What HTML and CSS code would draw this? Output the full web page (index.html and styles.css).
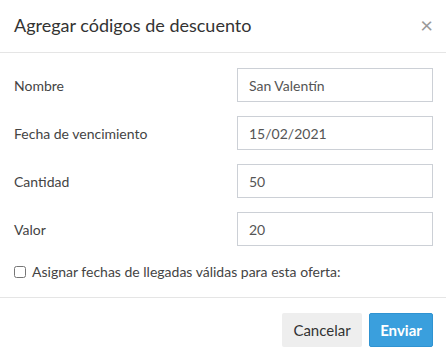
FILE: index.html
```html
<!DOCTYPE html>
<html lang="es">
<head>
    <meta charset="UTF-8">
    <meta name="viewport" content="width=device-width, initial-scale=1.0">
    <title>Agregar códigos de descuento</title>
    <link rel="stylesheet" href="styles.css">
</head>
<body>
    <div class="modal">
        <div class="modal-header">
            <h4 class="modal-title">Agregar códigos de descuento</h4>
            <button type="button" class="close">&times;</button>
        </div>
        <form class="modal-body">
            <div class="form-row">
                <label for="nombre">Nombre</label>
                <input type="text" id="nombre" value="San Valentín">
            </div>
            <div class="form-row">
                <label for="fecha">Fecha de vencimiento</label>
                <input type="text" id="fecha" value="15/02/2021">
            </div>
            <div class="form-row">
                <label for="cantidad">Cantidad</label>
                <input type="text" id="cantidad" value="50">
            </div>
            <div class="form-row">
                <label for="valor">Valor</label>
                <input type="text" id="valor" value="20">
            </div>
            <label class="check">
                <input type="checkbox" id="fechas">
                <span>Asignar fechas de llegadas válidas para esta oferta:</span>
            </label>
        </form>
        <div class="modal-footer">
            <button type="button" class="btn btn-default">Cancelar</button>
            <button type="button" class="btn btn-primary">Enviar</button>
        </div>
    </div>
</body>
</html>
```

FILE: styles.css
```css
body {
    margin: 0;
    font-family: Lato, "Open Sans", sans-serif;
    background: #fff;
    color: #444;
}
.modal {
    width: 446px;
}
.modal-header {
    display: flex;
    align-items: center;
    justify-content: space-between;
    height: 53px;
    padding: 0 13px 0 14px;
    box-sizing: border-box;
    border-bottom: 1px solid #e5e5e5;
}
.modal-title {
    margin: 0;
    font-size: 18px;
    font-weight: normal;
    color: #333;
    line-height: 23px;
    padding-bottom: 1px;
}
.close {
    border: none;
    background: none;
    padding: 0;
    font-family: Lato, sans-serif;
    font-size: 22px;
    line-height: 1;
    color: #999;
    cursor: pointer;
    margin-top: -3px;
}
.modal-body {
    margin: 0;
    padding: 15px 13px 15px 14px;
    border-bottom: 1px solid #e5e5e5;
}
.form-row {
    display: flex;
    align-items: center;
    margin-bottom: 14px;
}
.form-row label {
    flex: 0 0 223px;
    font-size: 14px;
}
.form-row input {
    flex: 1;
    min-width: 0;
    height: 34px;
    box-sizing: border-box;
    padding: 0 11px;
    border: 1px solid #ccd0d6;
    border-radius: 0;
    font-family: Lato, sans-serif;
    font-size: 14px;
    color: #555;
}
.check {
    display: flex;
    align-items: center;
    margin-top: 16px;
    font-size: 14px;
    line-height: 20px;
}
.check input {
    margin: 0 6px 0 0;
    width: 12px;
    height: 12px;
}
.modal-footer {
    display: flex;
    justify-content: flex-end;
    gap: 7px;
    padding: 15px 13px;
}
.btn {
    height: 34px;
    padding: 0;
    border: 1px solid transparent;
    border-radius: 2px;
    font-family: Lato, sans-serif;
    font-size: 15px;
    cursor: pointer;
}
.btn-default {
    background-color: #eeeeee;
    color: #333;
    width: 80px;
}
.btn-primary {
    background-color: #3a9fdd;
    border-color: #2f93d2;
    color: #fff;
    font-weight: bold;
    width: 64px;
}
```
